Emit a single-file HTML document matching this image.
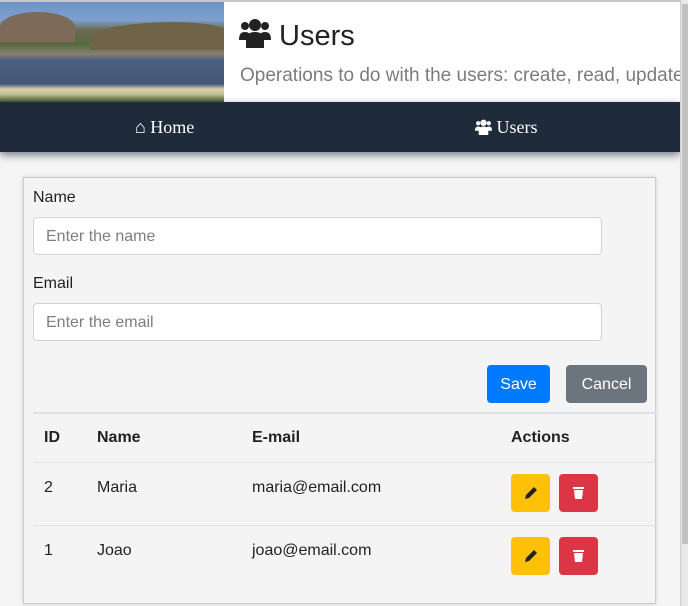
<!DOCTYPE html>
<html><head><style>
*{box-sizing:border-box;margin:0;padding:0}
html,body{width:688px;height:606px;overflow:hidden}
body{background:#f5f5f5;font-family:"Liberation Sans",sans-serif;position:relative;color:#222}
.top{position:absolute;left:0;top:0;width:680px;height:2px;background:#c8c8c8}
.img{position:absolute;left:0;top:2px;width:224px;height:100px;overflow:hidden;background:linear-gradient(180deg,#6f93c9 0%,#7ea0d0 18%,#6b6a50 28%,#556b3e 42%,#8a7f70 52%,#4b5f80 58%,#43587a 82%,#d9cfae 87%,#c6c196 92%,#3f5b2c 100%)}
.mtn{position:absolute;left:0;top:10px;width:75px;height:30px;background:#7d6a58;border-radius:50% 50% 0 0}
.mtn2{position:absolute;left:90px;top:20px;width:140px;height:28px;background:#6f6448;border-radius:60% 40% 0 0}
.hdr{position:absolute;left:224px;top:2px;width:456px;height:100px;background:#fff}
.hdr h1{position:absolute;left:15px;top:16px;font-size:29px;font-weight:normal;color:#222;white-space:nowrap}
.hdr p{position:absolute;left:16px;top:63px;font-size:19px;color:#7c7c7c;white-space:nowrap;overflow:hidden;width:440px}
.nav{position:absolute;left:0;top:102px;width:680px;height:50px;background:#1f2a3a;box-shadow:0 3px 8px rgba(30,40,60,.6);color:#fff;font-family:"Liberation Serif",serif;font-size:18px}
.nav span{position:absolute;top:15px}
.sb{position:absolute;left:680px;top:0;width:8px;height:606px;background:#e8e8e8;border-left:1px solid #ccc}
.sb div{position:absolute;left:1px;top:4px;width:6px;height:540px;background:#c1c1c1}
.card{position:absolute;left:23px;top:177px;width:633px;height:427px;background:#f4f4f4;border:1px solid #ccc;box-shadow:0 0 4px rgba(0,0,0,.15)}
label{position:absolute;left:9px;font-size:16px;color:#222}
.in{position:absolute;left:9px;width:569px;height:38px;background:#fff;border:1px solid #ced4da;border-radius:4px;font-size:16px;color:#7a7f85;padding:10px 12px}
.btn{position:absolute;top:187px;height:38px;border-radius:4px;color:#fff;font-size:16px;text-align:center;line-height:40px}
.hr{position:absolute;left:9px;width:624px;height:1px;background:#dee2e6}
.t{position:absolute;font-size:16px;color:#222}
.b{font-weight:bold}
.ab{position:absolute;width:39px;height:38px;border-radius:4px}
</style></head><body>
<div class="top"></div>
<div class="img"><div class="mtn"></div><div class="mtn2"></div></div>
<div class="hdr"><h1><svg width="32" height="30" viewBox="0 0 32 30" style="vertical-align:-3px"><circle cx="6" cy="8" r="4" fill="#222"/><circle cx="26" cy="8" r="4" fill="#222"/><circle cx="16" cy="7" r="6" fill="#222"/><path d="M0 22c0-6 2-8 6-8s6 2 6 8z M20 22c0-6 2-8 6-8s6 2 6 8z" fill="#222"/><path d="M7 30v-8c0-6 4-8 9-8s9 2 9 8v8z" fill="#222"/></svg> Users</h1><p>Operations to do with the users: create, read, update and delete</p></div>
<div class="nav"><span style="left:135px">&#8962; Home</span><span style="left:475px"><svg width="17" height="16" viewBox="0 0 32 30" style="vertical-align:-2px"><circle cx="6" cy="8" r="4" fill="#fff"/><circle cx="26" cy="8" r="4" fill="#fff"/><circle cx="16" cy="7" r="6" fill="#fff"/><path d="M0 22c0-6 2-8 6-8s6 2 6 8z M20 22c0-6 2-8 6-8s6 2 6 8z M7 30v-8c0-6 4-8 9-8s9 2 9 8v8z" fill="#fff"/></svg> Users</span></div>
<div class="sb"><div></div></div>
<div class="card">
<label style="top:11px">Name</label>
<div class="in" style="top:39px">Enter the name</div>
<label style="top:97px">Email</label>
<div class="in" style="top:125px">Enter the email</div>
<div class="btn" style="left:463px;width:63px;background:#007bff">Save</div>
<div class="btn" style="left:542px;width:81px;background:#6c757d">Cancel</div>
<div class="hr" style="top:234px;height:2px"></div>
<div class="t b" style="left:20px;top:251px">ID</div>
<div class="t b" style="left:73px;top:251px">Name</div>
<div class="t b" style="left:228px;top:251px">E-mail</div>
<div class="t b" style="left:487px;top:251px">Actions</div>
<div class="hr" style="top:284px"></div>
<div class="t" style="left:20px;top:301px">2</div>
<div class="t" style="left:73px;top:301px">Maria</div>
<div class="t" style="left:228px;top:301px">maria@email.com</div>
<div class="ab" style="left:487px;top:296px;background:#ffc107"><svg width="39" height="38"><path d="M14 25l1-4 8-8 3 3-8 8z" fill="#222"/></svg></div>
<div class="ab" style="left:535px;top:296px;background:#dc3545"><svg width="39" height="38"><path d="M14 13h11v2H14z M15 16h9l-1 9h-7z" fill="#fff"/></svg></div>
<div class="hr" style="top:347px"></div>
<div class="t" style="left:20px;top:364px">1</div>
<div class="t" style="left:73px;top:364px">Joao</div>
<div class="t" style="left:228px;top:364px">joao@email.com</div>
<div class="ab" style="left:487px;top:359px;background:#ffc107"><svg width="39" height="38"><path d="M14 25l1-4 8-8 3 3-8 8z" fill="#222"/></svg></div>
<div class="ab" style="left:535px;top:359px;background:#dc3545"><svg width="39" height="38"><path d="M14 13h11v2H14z M15 16h9l-1 9h-7z" fill="#fff"/></svg></div>
</div>
</body></html>
